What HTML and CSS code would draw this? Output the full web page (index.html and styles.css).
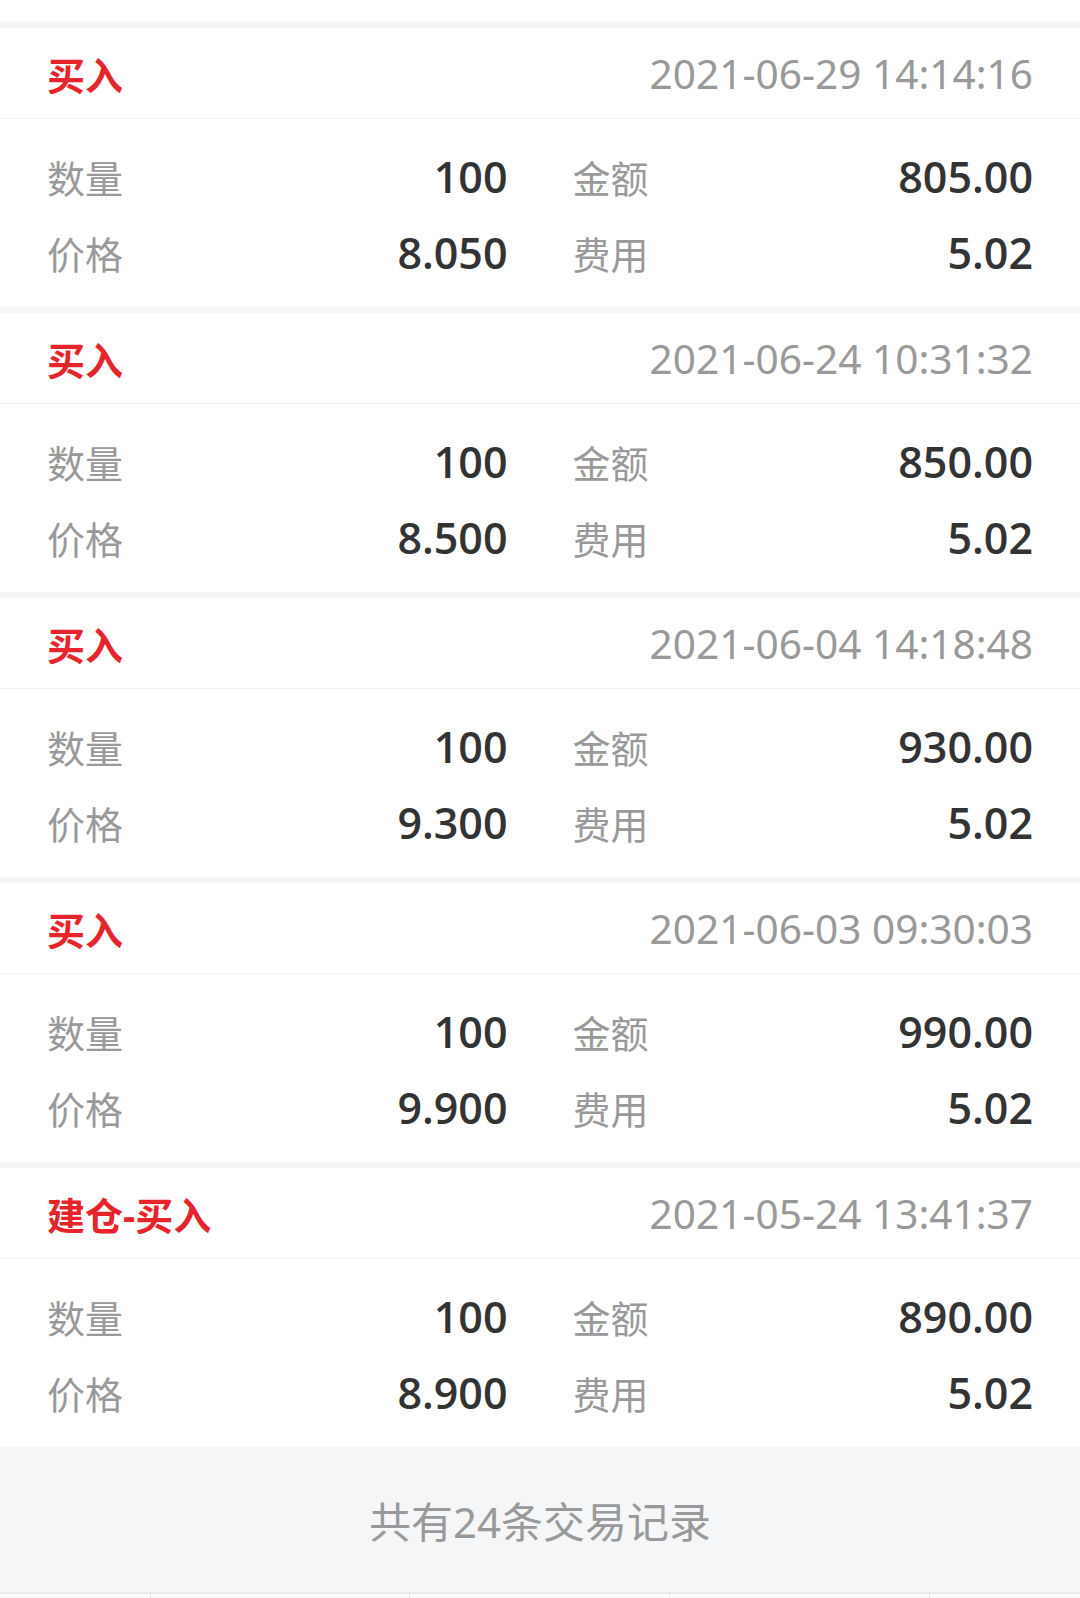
FILE: index.html
```html
<!DOCTYPE html>
<html lang="zh-CN">
<head>
    <meta charset="UTF-8" />
    <meta name="viewport" content="width=device-width, initial-scale=1.0" />
    <title>交易记录</title>
    <link rel="stylesheet" href="styles.css">
</head>
<body>

    <div class="top-strip"></div>

    <div class="record">
        <div class="record-head">
            <span class="type">买入</span>
            <span class="time">2021-06-29 14:14:16</span>
        </div>
        <div class="record-body">
            <div class="cell"><span class="label">数量</span><span class="value">100</span></div>
            <div class="cell"><span class="label">金额</span><span class="value">805.00</span></div>
            <div class="cell"><span class="label">价格</span><span class="value">8.050</span></div>
            <div class="cell"><span class="label">费用</span><span class="value">5.02</span></div>
        </div>
    </div>

    <div class="record">
        <div class="record-head">
            <span class="type">买入</span>
            <span class="time">2021-06-24 10:31:32</span>
        </div>
        <div class="record-body">
            <div class="cell"><span class="label">数量</span><span class="value">100</span></div>
            <div class="cell"><span class="label">金额</span><span class="value">850.00</span></div>
            <div class="cell"><span class="label">价格</span><span class="value">8.500</span></div>
            <div class="cell"><span class="label">费用</span><span class="value">5.02</span></div>
        </div>
    </div>

    <div class="record">
        <div class="record-head">
            <span class="type">买入</span>
            <span class="time">2021-06-04 14:18:48</span>
        </div>
        <div class="record-body">
            <div class="cell"><span class="label">数量</span><span class="value">100</span></div>
            <div class="cell"><span class="label">金额</span><span class="value">930.00</span></div>
            <div class="cell"><span class="label">价格</span><span class="value">9.300</span></div>
            <div class="cell"><span class="label">费用</span><span class="value">5.02</span></div>
        </div>
    </div>

    <div class="record">
        <div class="record-head">
            <span class="type">买入</span>
            <span class="time">2021-06-03 09:30:03</span>
        </div>
        <div class="record-body">
            <div class="cell"><span class="label">数量</span><span class="value">100</span></div>
            <div class="cell"><span class="label">金额</span><span class="value">990.00</span></div>
            <div class="cell"><span class="label">价格</span><span class="value">9.900</span></div>
            <div class="cell"><span class="label">费用</span><span class="value">5.02</span></div>
        </div>
    </div>

    <div class="record">
        <div class="record-head">
            <span class="type">建仓-买入</span>
            <span class="time">2021-05-24 13:41:37</span>
        </div>
        <div class="record-body">
            <div class="cell"><span class="label">数量</span><span class="value">100</span></div>
            <div class="cell"><span class="label">金额</span><span class="value">890.00</span></div>
            <div class="cell"><span class="label">价格</span><span class="value">8.900</span></div>
            <div class="cell"><span class="label">费用</span><span class="value">5.02</span></div>
        </div>
    </div>

    <div class="summary">共有24条交易记录</div>

    <div class="tabbar">
        <div class="tab"></div>
        <div class="tab"></div>
        <div class="tab"></div>
        <div class="tab"></div>
        <div class="tab"></div>
    </div>

</body>
</html>
```

FILE: styles.css
```css
body {
    margin: 0;
    background: #f5f6f8;
    font-family: 'Noto Sans', 'Noto Sans CJK SC', sans-serif;
    color: #333;
    overflow: hidden;
}

.top-strip {
    height: 22px;
    background: #fff;
}

.record {
    background: #fff;
    margin-top: 6px;
}

.record-head {
    height: 90px;
    padding: 0 47px;
    display: flex;
    align-items: center;
    justify-content: space-between;
    border-bottom: 1px solid #f2f2f2;
}

.type {
    color: #e5252b;
    font-size: 38px;
    font-weight: 700;
}

.time {
    color: #999;
    font-size: 40.6px;
}

.record-body {
    display: grid;
    grid-template-columns: 1fr 1fr;
    column-gap: 65px;
    padding: 19px 47px 17px;
}

.cell {
    height: 76px;
    display: flex;
    align-items: center;
    justify-content: space-between;
}

.label {
    color: #999;
    font-size: 38px;
}

.value {
    color: #333;
    font-family: 'Open Sans', 'Noto Sans CJK SC', sans-serif;
    font-size: 43px;
    font-weight: 600;
}

.summary {
    height: 145px;
    display: flex;
    align-items: center;
    justify-content: center;
    color: #999;
    font-size: 42px;
}

.tabbar {
    display: grid;
    grid-template-columns: 150px 259px 260px 260px 1fr;
    height: 40px;
    background: #fff;
    border-top: 2px solid #ebebeb;
}

.tab + .tab {
    border-left: 1px solid #e6e6e6;
}
```
